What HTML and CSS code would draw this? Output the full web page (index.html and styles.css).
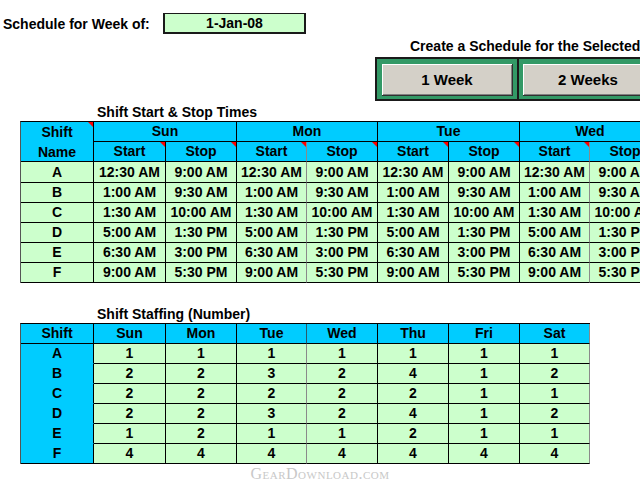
FILE: index.html
```html
<!DOCTYPE html>
<html>
<head>
<meta charset="utf-8">
<link rel="stylesheet" href="styles.css">
</head>
<body>
<div class="sheet">
  <div class="week-row">
    <span class="week-label">Schedule for Week of:</span>
    <div class="date-box">1-Jan-08</div>
  </div>
  <div class="create">
    <div class="create-title">Create a Schedule for the Selected</div>
    <div class="btn-group">
      <button class="btn">1 Week</button>
      <span class="divider"></span>
      <button class="btn">2 Weeks</button>
    </div>
  </div>

  <div class="section-title title-times">Shift Start &amp; Stop Times</div>
  <div class="grid times" role="table">
    <div class="c hd note name">Shift<br>Name</div>
    <div class="c hd span2">Sun</div>
    <div class="c hd span2">Mon</div>
    <div class="c hd span2">Tue</div>
    <div class="c hd span2">Wed</div>

    <div class="c hd note">Start</div><div class="c hd note">Stop</div>
    <div class="c hd note brk">Start</div><div class="c hd note">Stop</div>
    <div class="c hd note">Start</div><div class="c hd note">Stop</div>
    <div class="c hd note brk">Start</div><div class="c hd">Stop</div>

    <div class="c">A</div><div class="c">12:30 AM</div><div class="c">9:00 AM</div><div class="c brk">12:30 AM</div><div class="c">9:00 AM</div><div class="c">12:30 AM</div><div class="c">9:00 AM</div><div class="c brk">12:30 AM</div><div class="c">9:00 AM</div>
    <div class="c">B</div><div class="c">1:00 AM</div><div class="c">9:30 AM</div><div class="c brk">1:00 AM</div><div class="c">9:30 AM</div><div class="c">1:00 AM</div><div class="c">9:30 AM</div><div class="c brk">1:00 AM</div><div class="c">9:30 AM</div>
    <div class="c">C</div><div class="c">1:30 AM</div><div class="c">10:00 AM</div><div class="c brk">1:30 AM</div><div class="c">10:00 AM</div><div class="c">1:30 AM</div><div class="c">10:00 AM</div><div class="c brk">1:30 AM</div><div class="c">10:00 AM</div>
    <div class="c">D</div><div class="c">5:00 AM</div><div class="c">1:30 PM</div><div class="c brk">5:00 AM</div><div class="c">1:30 PM</div><div class="c">5:00 AM</div><div class="c">1:30 PM</div><div class="c brk">5:00 AM</div><div class="c">1:30 PM</div>
    <div class="c">E</div><div class="c">6:30 AM</div><div class="c">3:00 PM</div><div class="c brk">6:30 AM</div><div class="c">3:00 PM</div><div class="c">6:30 AM</div><div class="c">3:00 PM</div><div class="c brk">6:30 AM</div><div class="c">3:00 PM</div>
    <div class="c">F</div><div class="c">9:00 AM</div><div class="c">5:30 PM</div><div class="c brk">9:00 AM</div><div class="c">5:30 PM</div><div class="c">9:00 AM</div><div class="c">5:30 PM</div><div class="c brk">9:00 AM</div><div class="c">5:30 PM</div>
  </div>

  <div class="section-title title-staff">Shift Staffing (Number)</div>
  <div class="grid staff" role="table">
    <div class="c hd">Shift</div><div class="c hd">Sun</div><div class="c hd">Mon</div><div class="c hd brk-dark">Tue</div><div class="c hd">Wed</div><div class="c hd">Thu</div><div class="c hd">Fri</div><div class="c hd brk">Sat</div>

    <div class="c hd shift">A</div><div class="c">1</div><div class="c">1</div><div class="c brk">1</div><div class="c">1</div><div class="c">1</div><div class="c">1</div><div class="c brk">1</div>
    <div class="c hd shift">B</div><div class="c">2</div><div class="c">2</div><div class="c brk">3</div><div class="c">2</div><div class="c">4</div><div class="c">1</div><div class="c brk">2</div>
    <div class="c hd shift">C</div><div class="c">2</div><div class="c">2</div><div class="c brk">2</div><div class="c">2</div><div class="c">2</div><div class="c">1</div><div class="c brk">1</div>
    <div class="c hd shift">D</div><div class="c">2</div><div class="c">2</div><div class="c brk">3</div><div class="c">2</div><div class="c">4</div><div class="c">1</div><div class="c brk">2</div>
    <div class="c hd shift">E</div><div class="c">1</div><div class="c">2</div><div class="c brk">1</div><div class="c">1</div><div class="c">2</div><div class="c">1</div><div class="c brk">1</div>
    <div class="c hd shift last">F</div><div class="c">4</div><div class="c">4</div><div class="c brk">4</div><div class="c">4</div><div class="c">4</div><div class="c">4</div><div class="c brk">4</div>
  </div>

  <div class="watermark">GearDownload.com</div>
</div>
</body>
</html>
```

FILE: styles.css
```css
* { box-sizing: border-box; }
html, body { margin: 0; padding: 0; background: #fff; }

.sheet {
  width: 640px;
  height: 480px;
  overflow: hidden;
  font-family: "Liberation Sans", Arial, sans-serif;
  font-weight: bold;
  font-size: 14px;
  color: #000;
}

.week-row {
  display: flex;
  align-items: center;
  padding-top: 13px;
  height: 34px;
}
.week-label {
  margin-left: 3px;
  width: 160px;
  white-space: nowrap;
}
.date-box {
  width: 143px;
  height: 21px;
  border: 2px solid #1a1a1a;
  border-top-width: 1px;
  background: #ccffcc;
  text-align: center;
  line-height: 18px;
}

.create { margin-left: 375px; }
.create-title {
  margin-top: 4px;
  height: 16px;
  line-height: 16px;
  padding-left: 35px;
  white-space: nowrap;
}
.btn-group {
  margin-top: 3px;
  display: flex;
  align-items: flex-start;
  gap: 4px;
  height: 44px;
  width: 300px;
  padding: 5px 5px 3px;
  border: 2px solid #1a1a1a;
  background: #339966;
}
.divider {
  align-self: stretch;
  width: 2px;
  margin: -5px 0 -3px;
  background: #1a1a1a;
}
.btn {
  flex: none;
  width: 131px;
  height: 32px;
  padding: 0;
  border: none;
  border-right: 1px solid #303030;
  border-bottom: 1px solid #303030;
  background: #d4d0c8;
  box-shadow: inset 1px 1px 0 #ffffff, inset -1px -1px 0 #808080;
  font-family: "Liberation Sans", Arial, sans-serif;
  font-weight: bold;
  font-size: 15px;
  color: #000;
}

.section-title {
  height: 18px;
  line-height: 18px;
  padding-left: 97px;
  white-space: nowrap;
}
.title-times { margin-top: 2px; }
.title-staff { margin-top: 22px; }

/* spreadsheet grids */
.grid {
  display: grid;
  width: max-content;
  margin-left: 20px;
  border-top: 1px solid #000;
  border-left: 1px solid #555;
}
.times {
  grid-template-columns: 73px 72px 71px 70px 71px 71px 71px 70px 71px;
  grid-template-rows: 20px 20px 21px repeat(5, 20px);
}
.staff {
  grid-template-columns: 73px 72px 71px 70px 71px 71px 71px 70px;
  grid-auto-rows: 20px;
}

.c {
  display: flex;
  align-items: center;
  justify-content: center;
  text-align: center;
  line-height: 19px;
  white-space: nowrap;
  border-right: 1px solid #000;
  border-bottom: 1px solid #000;
  background: #ccffcc;
}
.c.hd { background: #00ccff; }
.name { grid-row: span 2; line-height: 20px; }
.span2 { grid-column: span 2; }

.c.brk { border-right-color: #8a8a8a; }
.c.brk-dark { border-right-color: #2a5a6a; }

.staff .shift { border-bottom-color: #00ccff; }
.staff .shift.last { border-bottom-color: #000; }

.note { position: relative; }
.note::after {
  content: "";
  position: absolute;
  top: 0;
  right: 0;
  border-top: 5px solid #ff0000;
  border-left: 5px solid transparent;
}

.watermark {
  margin-top: 2px;
  height: 16px;
  line-height: 16px;
  text-align: center;
  font-family: "Liberation Serif", "Times New Roman", serif;
  font-weight: normal;
  font-variant: small-caps;
  font-size: 16px;
  letter-spacing: 0.5px;
  color: #c8c8c8;
}
```
